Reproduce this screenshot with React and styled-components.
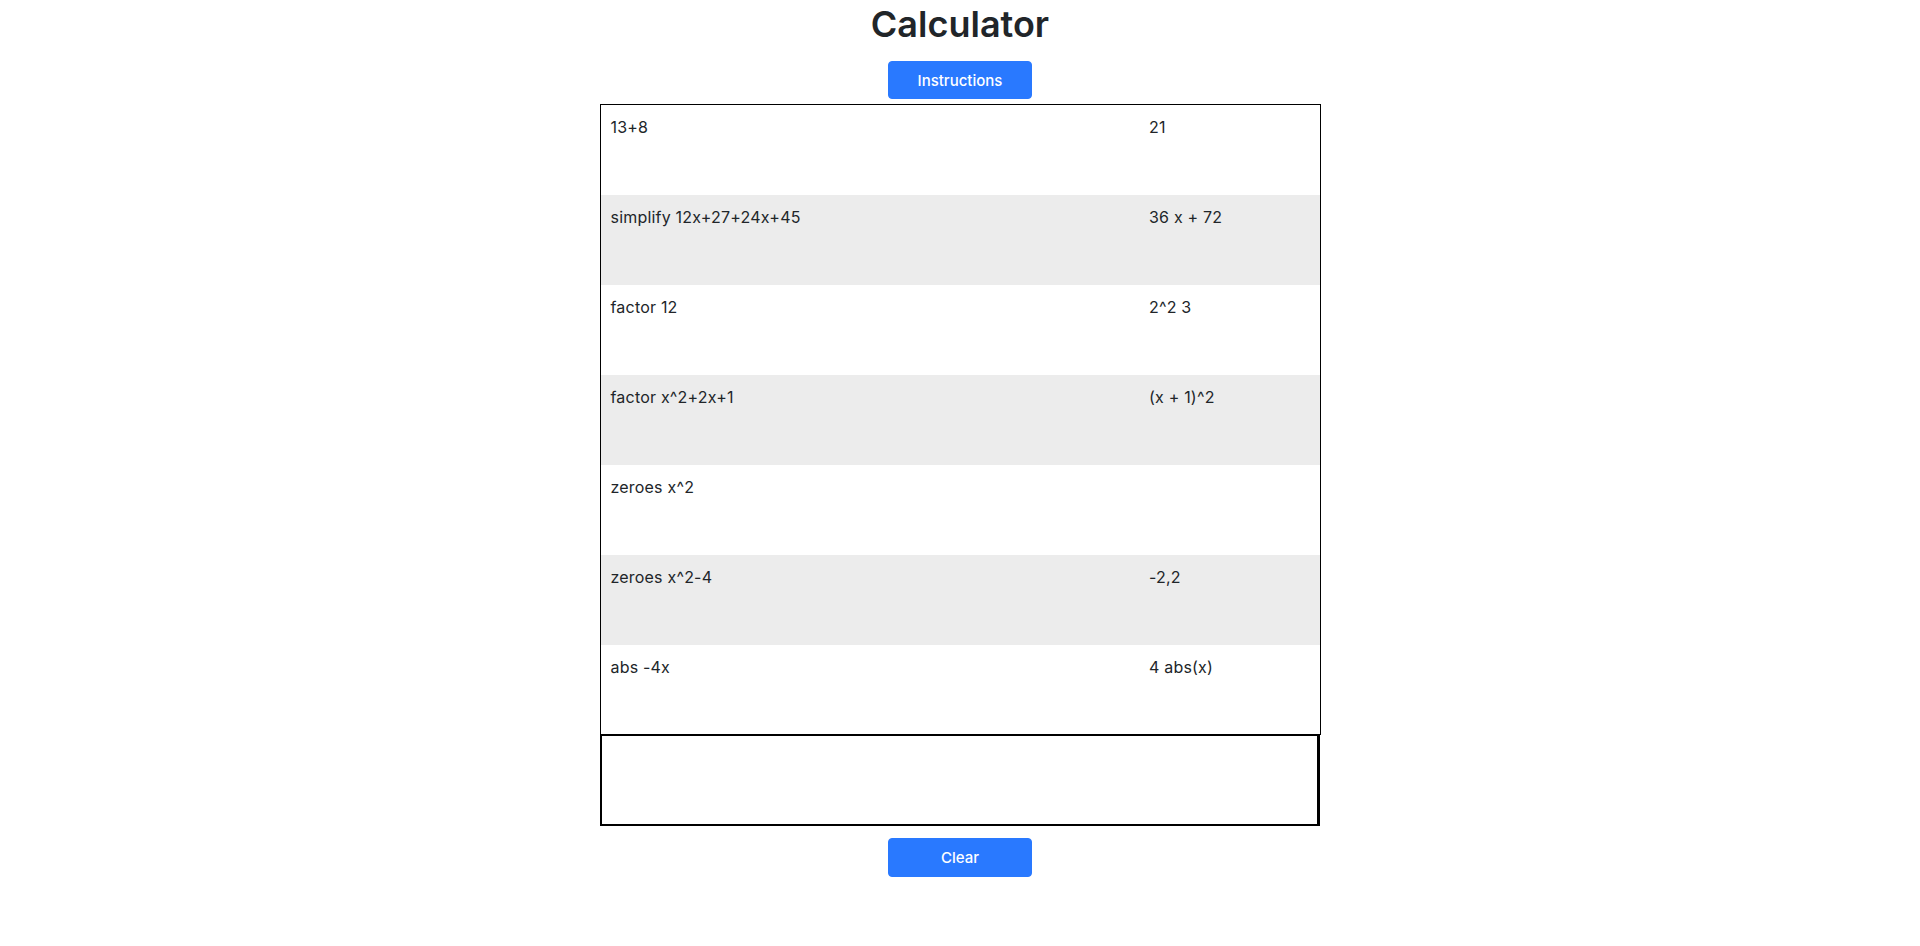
import styled, { createGlobalStyle } from "styled-components";

const GlobalStyle = createGlobalStyle`
  body {
    margin: 0;
    background: #ffffff;
    font-family: Inter, "Liberation Sans", Arial, sans-serif;
    color: #212529;
  }
`;

const Page = styled.div`
  display: flex;
  flex-direction: column;
  align-items: center;
  padding-top: 3px;
`;

const Title = styled.h1`
  margin: 0;
  font-size: 36px;
  font-weight: 600;
  line-height: 1.2;
  letter-spacing: 0;
  color: #212529;
`;

const Button = styled.button`
  width: 144px;
  height: ${(p) => p.$height || 38}px;
  margin-top: ${(p) => p.$top || 0}px;
  border: 1px solid #2979ff;
  border-radius: 4px;
  background: #2979ff;
  color: #ffffff;
  font-family: Inter, "Liberation Sans", Arial, sans-serif;
  font-size: 15px;
  font-weight: 500;
  cursor: pointer;
`;

const Table = styled.table`
  width: 720px;
  margin-top: 5px;
  border: 1px solid #000;
  border-collapse: collapse;
  table-layout: fixed;
`;

const Col = styled.col`
  width: ${(p) => p.$width};
`;

const Row = styled.tr`
  height: 90px;
  background: ${(p) => (p.$striped ? "#ececec" : "#ffffff")};
`;

const Cell = styled.td`
  padding: 12px 10px;
  vertical-align: top;
  font-size: 16px;
  line-height: 1.3;
  letter-spacing: 0.2px;
  color: #212529;
`;

const Entry = styled.textarea`
  box-sizing: border-box;
  display: block;
  width: 720px;
  height: 91px;
  margin: 0;
  border-style: solid;
  border-color: #000;
  border-width: 1px 3px 2px 2px;
  resize: none;
  outline: none;
  font-family: Inter, "Liberation Sans", Arial, sans-serif;
  font-size: 16px;
`;

const history = [
  ["13+8", "21"],
  ["simplify 12x+27+24x+45", "36 x + 72"],
  ["factor 12", "2^2 3"],
  ["factor x^2+2x+1", "(x + 1)^2"],
  ["zeroes x^2", ""],
  ["zeroes x^2-4", "-2,2"],
  ["abs -4x", "4 abs(x)"],
];

export default function App() {
  return (
    <>
      <GlobalStyle />
      <Page>
        <Title>Calculator</Title>
        <Button $top={15}>Instructions</Button>
        <Table>
          <colgroup>
            <Col $width="539px" />
            <Col $width="181px" />
          </colgroup>
          <tbody>
            {history.map(([input, output], i) => (
              <Row key={i} $striped={i % 2 === 1}>
                <Cell>{input}</Cell>
                <Cell>{output}</Cell>
              </Row>
            ))}
          </tbody>
        </Table>
        <Entry />
        <Button $top={12} $height={39}>Clear</Button>
      </Page>
    </>
  );
}
